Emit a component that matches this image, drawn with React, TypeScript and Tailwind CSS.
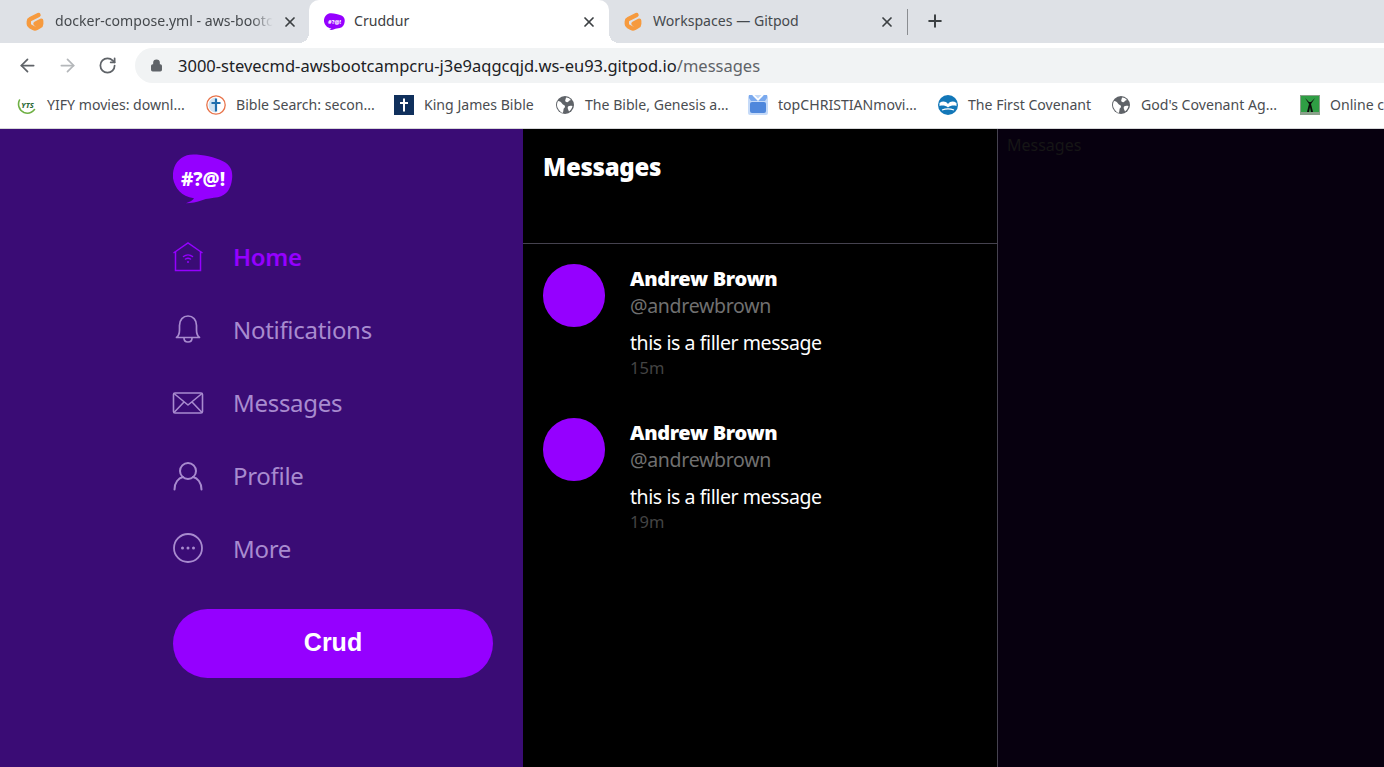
import type {ReactNode} from "react";
import {ArrowLeft, ArrowRight, Lock, Plus, RotateCw, X} from "lucide-react";

const ui = "font-['Noto_Sans',sans-serif]";

function GitpodIcon() {
    return (
        <svg width="22" height="22" viewBox="0 0 22 22" className="shrink-0">
            <path d="M14.500 4 6.500 8c-1 .5-1.700 1.300-1.700 2.400v2.600c0 1 .6 1.800 1.500 2.300l3.200 1.800c1 .5 2 .5 3 0l3-1.700c1-.5 1.700-1.400 1.700-2.400V9.800l-5.700 3" fill="none" stroke="#f69a3e" strokeWidth="4.400" strokeLinecap="round" strokeLinejoin="round"/>
        </svg>
    );
}

function CruddurIcon({w = 60, size = 19}: {w?: number; size?: number}) {
    return (
        <svg width={w} height={w * 0.84} viewBox="0 0 60 50" className="shrink-0">
            <path d="M14 1C22-1 40 2 50 7c8 4 10 10 9 18-1 9-5 16-14 18-6 1-11 1-16 3-5 2-11 3-16 3 3-1 7-3 8-5C8 42 2 34 0 24-1 14 4 4 14 1z" fill="#9500ff"/>
            <text x="30" y="32" textAnchor="middle" fill="#fff" fontSize={size} fontWeight="800" fontFamily="Noto Sans, sans-serif">#?@!</text>
        </svg>
    );
}

function Tab({icon, title, active, fade, width}: {icon: ReactNode; title: string; active?: boolean; fade?: boolean; width: string}) {
    return (
        <div className={`relative flex h-full items-center ${width} ${active
            ? "bg-white rounded-t-[10px] pl-[15px] pr-[12px] gap-[9px] before:absolute before:bottom-0 before:-left-[10px] before:size-[10px] before:bg-[radial-gradient(circle_at_0_0,transparent_10px,white_10px)] after:absolute after:bottom-0 after:-right-[10px] after:size-[10px] after:bg-[radial-gradient(circle_at_100%_0,transparent_10px,white_10px)]"
            : "pl-[13px] pr-[11px] gap-[9px]"}`}>
            {icon}
            <span className={`flex-1 overflow-hidden whitespace-nowrap pb-[2px] text-[14.1px] ${active ? "text-[#3c4043]" : "text-[#45494d]"} ${fade ? "[mask-image:linear-gradient(to_right,black_90%,transparent)]" : ""}`}>{title}</span>
            <X size={16} strokeWidth={2.6} className="text-[#3c4043] shrink-0"/>
        </div>
    );
}

function Bookmark({icon, label, width}: {icon: ReactNode; label: string; width: string}) {
    return (
        <div className={`flex items-center gap-[10px] shrink-0 ${width}`}>
            {icon}
            <span className="text-[14.1px] text-[#4a4d51] whitespace-nowrap pb-[1px]">{label}</span>
        </div>
    );
}

function GlobeFill() {
    return (
        <svg width="20" height="20" viewBox="0 0 20 20" className="shrink-0">
            <circle cx="10" cy="10" r="9" fill="#5f6368"/>
            <path d="M3 6c2 .2 3 1 4 2.500s3 1.500 3 3-1.500 1.500-1.500 3-.5 3-1 3.500C5 17 2 13 2 10c0-1.500.5-3 1-4zM11 2.500c2.500.2 4 1.300 5 2.500-1 .5-2 .5-2.500 1.500s-2 1-3 0 .5-2.500.5-4zM13 11.500c1-1 3-1 4.500-.5-.5 2.500-2 4.500-3.500 5.500-.5-1.500-2-3.500-1-5z" fill="#fff"/>
        </svg>
    );
}

function BrowserChrome() {
    return (
        <div className={`${ui} h-[129px] bg-white border-b border-[#d6d7d9]`}>
            <div className="flex h-[43px] bg-[#dee1e6] pl-[11px] items-stretch">
                <Tab width="w-[298px]" fade title="docker-compose.yml - aws-bootc" icon={<GitpodIcon/>}/>
                <Tab width="w-[300px]" active title="Cruddur" icon={<CruddurIcon w={21} size={16}/>}/>
                <Tab width="w-[297px]" title="Workspaces — Gitpod" icon={<GitpodIcon/>}/>
                <div className="w-px h-[26px] self-center bg-[#8a8d91] ml-[1px]"/>
                <Plus size={20} strokeWidth={2.4} className="text-[#3c4043] self-center ml-[17px] -mt-[2px]"/>
            </div>
            <div className="flex h-[40px] items-end bg-white pl-[17px]">
                <div className="flex items-center self-center pt-[5px]">
                    <ArrowLeft size={21} strokeWidth={2} className="text-[#5f6368]"/>
                    <ArrowRight size={21} strokeWidth={2} className="text-[#b4b7ba] ml-[19px]"/>
                    <RotateCw size={19} strokeWidth={2.2} className="text-[#5f6368] ml-[20px]"/>
                </div>
                <div className="ml-[18px] flex h-[35px] flex-1 items-center rounded-l-full bg-[#f1f3f4] pl-[15px]">
                    <Lock size={13} fill="#5f6368" strokeWidth={2.2} className="text-[#5f6368]"/>
                    <span className="ml-[15px] pt-[1px] text-[16.5px] text-[#202124] whitespace-nowrap">3000-stevecmd-awsbootcampcru-j3e9aqgcqjd.ws-eu93.gitpod.io<span className="text-[#5f6368]">/messages</span></span>
                </div>
            </div>
            <div className="flex h-[45px] items-center overflow-hidden pl-[17px]">
                <Bookmark width="w-[189px]" label="YIFY movies: downl..." icon={
                    <svg width="20" height="20" viewBox="0 0 20 20" className="shrink-0">
                        <path d="M2.500 5C.5 9 1.500 15 7 17.500c4 1.500 8 0 10.500-3" fill="none" stroke="#6fb044" strokeWidth="1.600" strokeLinecap="round"/>
                        <text x="10.500" y="12.500" textAnchor="middle" fontSize="7.500" fontWeight="800" fontStyle="italic" fill="#2f6b3a" fontFamily="Noto Sans, sans-serif">YTS</text>
                    </svg>
                }/>
                <Bookmark width="w-[188px]" label="Bible Search: secon..." icon={
                    <svg width="20" height="20" viewBox="0 0 20 20" className="shrink-0">
                        <circle cx="10" cy="10" r="9.200" fill="#fff" stroke="#e8734a" strokeWidth="1.300"/>
                        <path d="M10 2.500a7.500 7.500 0 0 0 0 15z" fill="#cfe3f2"/>
                        <path d="M10 3.500v13M5.500 8h9" stroke="#1f6fae" strokeWidth="2.200"/>
                    </svg>
                }/>
                <Bookmark width="w-[161px]" label="King James Bible" icon={
                    <svg width="20" height="20" viewBox="0 0 20 20" className="shrink-0">
                        <rect width="20" height="20" fill="#10305c"/>
                        <path d="M10 3.500v13M6 8h8" stroke="#fff" strokeWidth="2"/>
                    </svg>
                }/>
                <Bookmark width="w-[193px]" label="The Bible, Genesis a..." icon={<GlobeFill/>}/>
                <Bookmark width="w-[190px]" label="topCHRISTIANmovi..." icon={
                    <svg width="20" height="20" viewBox="0 0 20 20" className="shrink-0">
                        <rect width="20" height="20" rx="2" fill="#c5daf8"/>
                        <path d="M5 0l5 5 5-5" fill="none" stroke="#fff" strokeWidth="2"/>
                        <path d="M1 0h3l6 6 6-6h3v3L17 6H3L1 3z" fill="#7aa9ee"/>
                        <rect x="2" y="7" width="16" height="11" rx="2" fill="#4f87dc"/>
                    </svg>
                }/>
                <Bookmark width="w-[173px]" label="The First Covenant" icon={
                    <svg width="20" height="20" viewBox="0 0 20 20" className="shrink-0">
                        <circle cx="10" cy="10" r="10" fill="#1277b8"/>
                        <path d="M1.500 8c3-2 6-2 8.500 1 2.500-3 5.500-3 8.500-1v3c-3-1-6-.5-8.500 1.500C7.500 10.500 4.500 10 1.500 11z" fill="#fff"/>
                        <path d="M4 15c4-1.500 8-1.500 12 0" fill="none" stroke="#fff" strokeWidth="1.200"/>
                    </svg>
                }/>
                <Bookmark width="w-[189px]" label="God's Covenant Ag..." icon={<GlobeFill/>}/>
                <Bookmark width="w-[60px]" label="Online c" icon={
                    <svg width="20" height="20" viewBox="0 0 20 20" className="shrink-0">
                        <rect width="20" height="20" fill="#8aa08a"/>
                        <rect x="1" y="1" width="18" height="16" fill="#2f9e44"/>
                        <path d="M5 3l4 6-2 8h2l1-5 1 5h2l-2-8 4-6-4 4h-2z" fill="#0b0b0b"/>
                    </svg>
                }/>
            </div>
        </div>
    );
}

function HomeIcon() {
    return (
        <svg width="32" height="32" viewBox="0 0 32 32" fill="none" stroke="currentColor" strokeWidth="1.500" className="-ml-[1px] -mt-[2px]">
            <path d="M1.500 12 16 2l14.500 10"/>
            <path d="M3.500 10.500v19h25v-19"/>
            <path d="M11.500 15.500c2.600-2 6.400-2 9 0M13.500 18c1.500-1 3.500-1 5 0" strokeLinecap="round"/>
            <circle cx="16" cy="21" r="1" fill="currentColor" stroke="none"/>
        </svg>
    );
}

function BellIcon() {
    return (
        <svg width="30" height="30" viewBox="0 0 30 30" fill="none" stroke="currentColor" strokeWidth="1.700" strokeLinejoin="round" className="-mt-[4px]">
            <path d="M3.500 23.500c2-1.500 3-3.500 3-7.500v-4.500c0-5.500 3.500-9.500 8.500-9.500s8.500 4 8.500 9.500V16c0 4 1 6 3 7.500z"/>
            <path d="M11 24c0 2.500 1.800 4 4 4s4-1.500 4-4"/>
        </svg>
    );
}

function MailIcon() {
    return (
        <svg width="32" height="32" viewBox="0 0 32 32" fill="none" stroke="currentColor" strokeWidth="1.600" strokeLinejoin="round" className="-ml-[1px] -mt-[2px]">
            <rect x="1.500" y="6" width="29" height="20" rx="1.500"/>
            <path d="M2 6.500 16 18 30 6.500M2 25.500 12 15M30 25.500 20 15"/>
        </svg>
    );
}

function ProfileIcon() {
    return (
        <svg width="32" height="32" viewBox="0 0 32 32" fill="none" stroke="currentColor" strokeWidth="2" strokeLinecap="round" className="-ml-[1px] -mt-[2px]">
            <circle cx="16" cy="11" r="8"/>
            <path d="M2.500 29.500c0-7 4-11.500 8.500-12.500M29.500 29.500c0-7-4-11.500-8.500-12.500"/>
        </svg>
    );
}

function MoreIcon() {
    return (
        <svg width="30" height="30" viewBox="0 0 30 30" fill="none" stroke="currentColor" strokeWidth="1.800" className="-mt-[4px]">
            <circle cx="15" cy="15" r="14"/>
            <circle cx="9.500" cy="15" r="1.500" fill="currentColor" stroke="none"/>
            <circle cx="15" cy="15" r="1.500" fill="currentColor" stroke="none"/>
            <circle cx="20.500" cy="15" r="1.500" fill="currentColor" stroke="none"/>
        </svg>
    );
}

function NavItem({icon, label, active}: {icon: ReactNode; label: string; active?: boolean}) {
    return (
        <div className={`flex h-[73px] items-center ${active ? "text-[#9500ff]" : "text-[#a88bcf]"}`}>
            <span className="flex w-[60px] shrink-0">{icon}</span>
            <span className={`pb-[2px] text-[24px] tracking-[-0.3px] ${active ? "font-semibold" : ""}`}>{label}</span>
        </div>
    );
}

function Sidebar() {
    return (
        <div className="w-[523px] shrink-0 bg-[#3a0c75] pl-[173px] pr-[30px] pt-[25px]">
            <CruddurIcon/>
            <div className="mt-[17px]">
                <NavItem active label="Home" icon={<HomeIcon/>}/>
                <NavItem label="Notifications" icon={<BellIcon/>}/>
                <NavItem label="Messages" icon={<MailIcon/>}/>
                <NavItem label="Profile" icon={<ProfileIcon/>}/>
                <NavItem label="More" icon={<MoreIcon/>}/>
            </div>
            <button className="mt-[23px] flex h-[69px] w-[320px] items-center justify-center rounded-full bg-[#9500ff] pb-[2px] font-['Liberation_Sans',sans-serif] text-[25px] font-bold text-white">Crud</button>
        </div>
    );
}

function MessageRow({time}: {time: string}) {
    return (
        <div className="flex h-[154px] pl-[20px] pt-[20px]">
            <div className="h-[63px] w-[62px] shrink-0 rounded-full bg-[#9500ff]"/>
            <div className="ml-[25px] mt-[1px]">
                <div className="text-[20px] leading-[28px] font-black text-white tracking-[-0.35px]">Andrew Brown</div>
                <div className="text-[19.5px] leading-[26px] tracking-[-0.3px] text-[#707070]">@andrewbrown</div>
                <div className="mt-[10px] text-[19.5px] leading-[28px] tracking-[-0.42px] text-white">this is a filler message</div>
                <div className="text-[16.5px] leading-[22px] text-[#444444]">{time}</div>
            </div>
        </div>
    );
}

export default function App() {
    return (
        <div className={`${ui} h-[767px] w-[1384px] overflow-hidden flex flex-col`}>
            <BrowserChrome/>
            <div className="flex flex-1">
                <Sidebar/>
                <main className="w-[475px] shrink-0 bg-black border-r border-[#45424f]">
                    <div className="h-[115px] border-b border-[#45424f] pl-[20px] pt-[20px]">
                        <h1 className="text-[24px] leading-[36px] font-black text-white tracking-[-0.3px]">Messages</h1>
                    </div>
                    <MessageRow time="15m"/>
                    <MessageRow time="19m"/>
                </main>
                <aside className="flex-1 bg-[#07000f] pl-[9px] pt-[4px] text-[16px] text-[#161616]">Messages</aside>
            </div>
        </div>
    );
}
